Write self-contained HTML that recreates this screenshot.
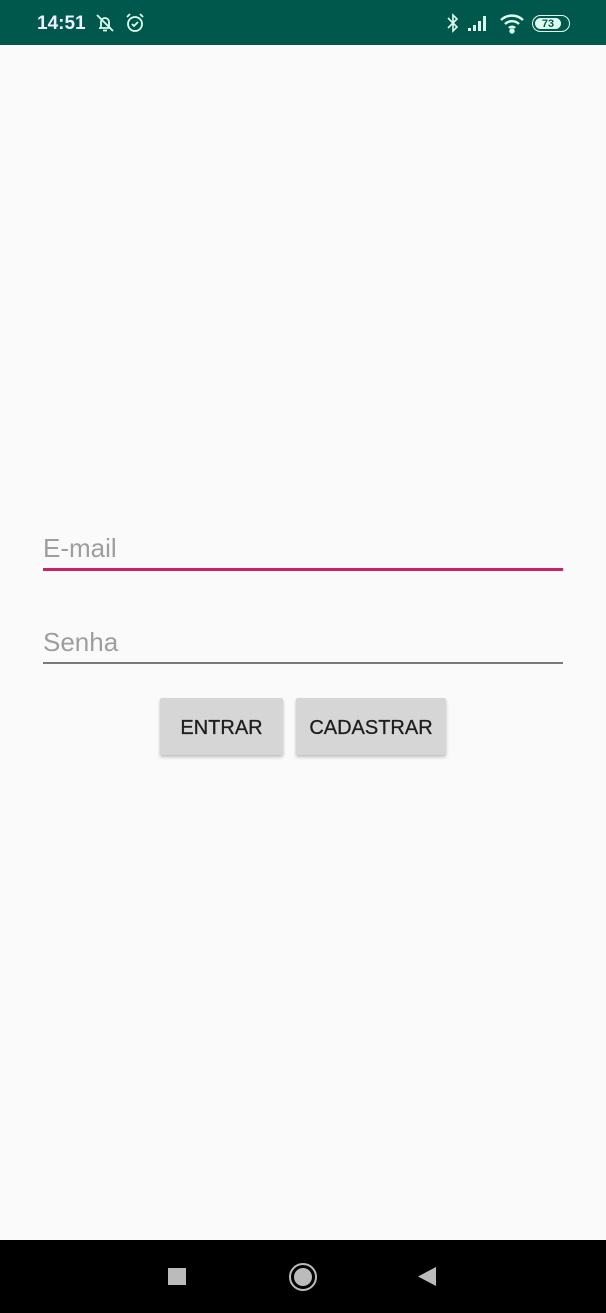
<!DOCTYPE html>
<html><head><meta charset="utf-8"><style>
*{margin:0;padding:0;box-sizing:border-box}
body{width:606px;height:1313px;background:#fafafa;position:relative;overflow:hidden;font-family:"Liberation Sans",sans-serif}
.sb{position:absolute;left:0;top:0;width:606px;height:45px;background:#00574b;color:#fff}
.time{position:absolute;left:37px;top:13px;font-size:19px;font-weight:bold;color:#eef}
.lbl{position:absolute;left:43px;font-size:26px;color:#9e9e9e}
.line{position:absolute;left:43px;width:520px}
.btn{position:absolute;top:698px;height:57px;background:#d6d6d6;border-radius:2px;box-shadow:0 2px 3px rgba(0,0,0,.25);font-size:20px;color:#1e1e1e;text-align:center;line-height:60px;-webkit-text-stroke:0.3px #1e1e1e}
.nav{position:absolute;left:0;top:1240px;width:606px;height:73px;background:#000}
</style></head><body>
<div class="sb">
<div class="time">14:51</div>
<svg style="position:absolute;left:94px;top:12px" width="22" height="22" viewBox="0 0 22 22" fill="none" stroke="#dfe" stroke-width="1.8"><path d="M5 16h12M7 16V10a4 4 0 0 1 8 0v6M9 18.5h4M3 3l16 16"/></svg>
<svg style="position:absolute;left:124px;top:12px" width="22" height="22" viewBox="0 0 22 22" fill="none" stroke="#dfe" stroke-width="1.8"><circle cx="11" cy="12" r="7"/><path d="M8 12l2 2 4-4M3 5l3-3M19 5l-3-3"/></svg>
<svg style="position:absolute;left:446px;top:12px" width="14" height="22" viewBox="0 0 14 22" fill="none" stroke="#dfe" stroke-width="1.6"><path d="M2 6l9 9-4 4V3l4 4-9 9"/></svg>
<svg style="position:absolute;left:467px;top:14px" width="24" height="18" viewBox="0 0 24 18" fill="#dfe"><rect x="1" y="14" width="3" height="3"/><rect x="6" y="11" width="3" height="6"/><rect x="11" y="7" width="3" height="10"/><rect x="16" y="2" width="3" height="15"/></svg>
<svg style="position:absolute;left:499px;top:12px" width="26" height="22" viewBox="0 0 26 22" fill="none" stroke="#dfe" stroke-width="2.4"><path d="M2 8a16 16 0 0 1 22 0M6 12a10 10 0 0 1 14 0M10 16a4 4 0 0 1 6 0"/><circle cx="13" cy="19" r="1.5" fill="#dfe"/></svg>
<div style="position:absolute;left:532px;top:15px;width:38px;height:17px;border:1.5px solid #dfe;border-radius:9px"><div style="position:absolute;left:2px;top:1.5px;width:26px;height:11px;background:#dfe;border-radius:6px;color:#00574b;font-size:11px;font-weight:bold;line-height:12px;text-align:center">73</div></div>
</div>
<div class="lbl" style="top:533px">E-mail</div>
<div class="line" style="top:568px;height:3px;background:#d0206a"></div>
<div class="lbl" style="top:627px">Senha</div>
<div class="line" style="top:662px;height:2px;background:#7a7a7a"></div>
<div class="btn" style="left:160px;width:123px">ENTRAR</div>
<div class="btn" style="left:296px;width:150px">CADASTRAR</div>
<div class="nav">
<div style="position:absolute;left:168px;top:28px;width:18px;height:17px;background:#bbb"></div>
<div style="position:absolute;left:289px;top:23px;width:28px;height:28px;border:2px solid #bbb;border-radius:50%"><div style="position:absolute;left:3px;top:3px;width:18px;height:18px;background:#bbb;border-radius:50%"></div></div>
<svg style="position:absolute;left:417px;top:26px" width="20" height="21"><path d="M1 10.5L19 1v19z" fill="#bbb"/></svg>
</div>
</body></html>
